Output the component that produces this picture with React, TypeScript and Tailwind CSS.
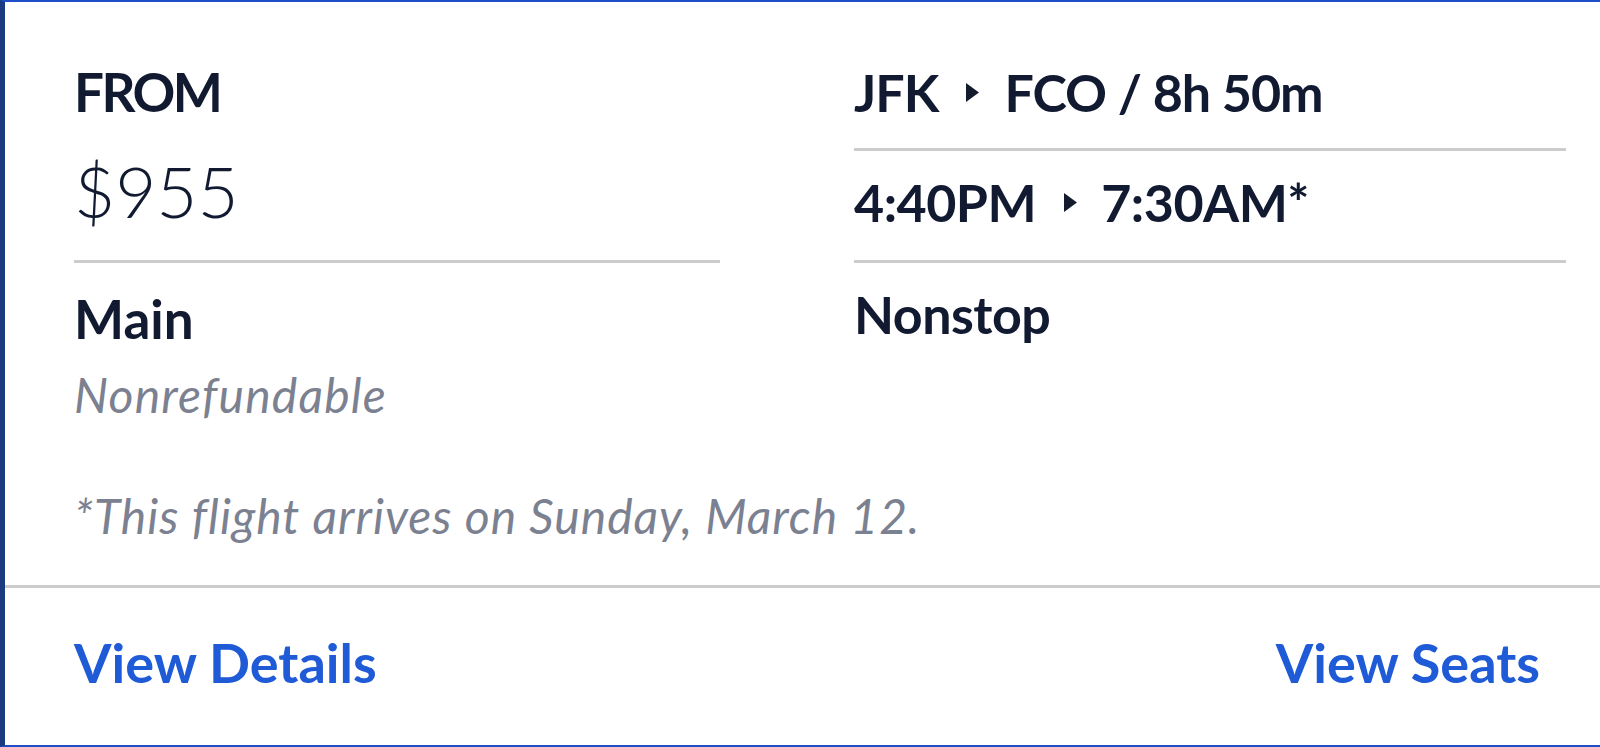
import React from "react";

function Tri() {
  return (
    <svg width="13" height="19" viewBox="0 0 13 19" className="inline-block shrink-0">
      <path d="M0 0 L13 9.5 L0 19 Z" fill="#141b2d" />
    </svg>
  );
}

export default function App() {
  return (
    <div className="w-[1600px] h-[747px] bg-white overflow-hidden" style={{ fontFamily: "Lato, 'Open Sans', sans-serif" }}>
      <div className="h-[747px] bg-white border-l-[5px] border-l-[#1c3a80] border-t-2 border-t-[#1f4fc8] border-b-2 border-b-[#1f4fc8] flex flex-col text-[#111a30]">
        <div className="pl-[69px] pr-[34px] pt-[63px]">
          <div className="grid grid-cols-[646px_1fr] gap-x-[134px]">
            <div className="flex flex-col">
              <div className="text-[53px] leading-none font-bold tracking-[-2.5px]">FROM</div>
              <div className="text-[71px] leading-none font-light mt-[37px]">$955</div>
              <div className="h-[3px] bg-[#cccccc] mt-[34px]" />
              <div className="text-[53px] leading-none font-bold mt-[29px]">Main</div>
              <div className="text-[48px] leading-none italic font-normal tracking-[1.2px] text-[#7b8190] mt-[26px]">Nonrefundable</div>
            </div>
            <div className="flex flex-col">
              <div className="text-[52px] leading-none font-bold mt-[1px] flex items-center tracking-[-1px]">
                <span>JFK</span>
                <span className="ml-[28px] mr-[25px] flex"><Tri /></span>
                <span>FCO / 8h 50m</span>
              </div>
              <div className="h-[3px] bg-[#cccccc] mt-[30px]" />
              <div className="text-[52px] leading-none font-bold mt-[25px] flex items-center tracking-[-0.5px]">
                <span>4:40PM</span>
                <span className="ml-[28px] mr-[24px] flex"><Tri /></span>
                <span>7:30AM*</span>
              </div>
              <div className="h-[3px] bg-[#cccccc] mt-[32px]" />
              <div className="text-[52px] leading-none font-bold mt-[25px] tracking-[-0.5px]">Nonstop</div>
            </div>
          </div>
          <div className="text-[48px] leading-none italic font-normal tracking-[1px] text-[#7b8190] mt-[73px]">*This flight arrives on Sunday, March 12.</div>
        </div>
        <div className="h-[3px] bg-[#cccccc] mt-[45px]" />
        <div className="pl-[69px] pr-[60px] mt-[48px] flex justify-between text-[54px] leading-none font-bold text-[#1f5ad7]">
          <span>View Details</span>
          <span>View Seats</span>
        </div>
      </div>
    </div>
  );
}
